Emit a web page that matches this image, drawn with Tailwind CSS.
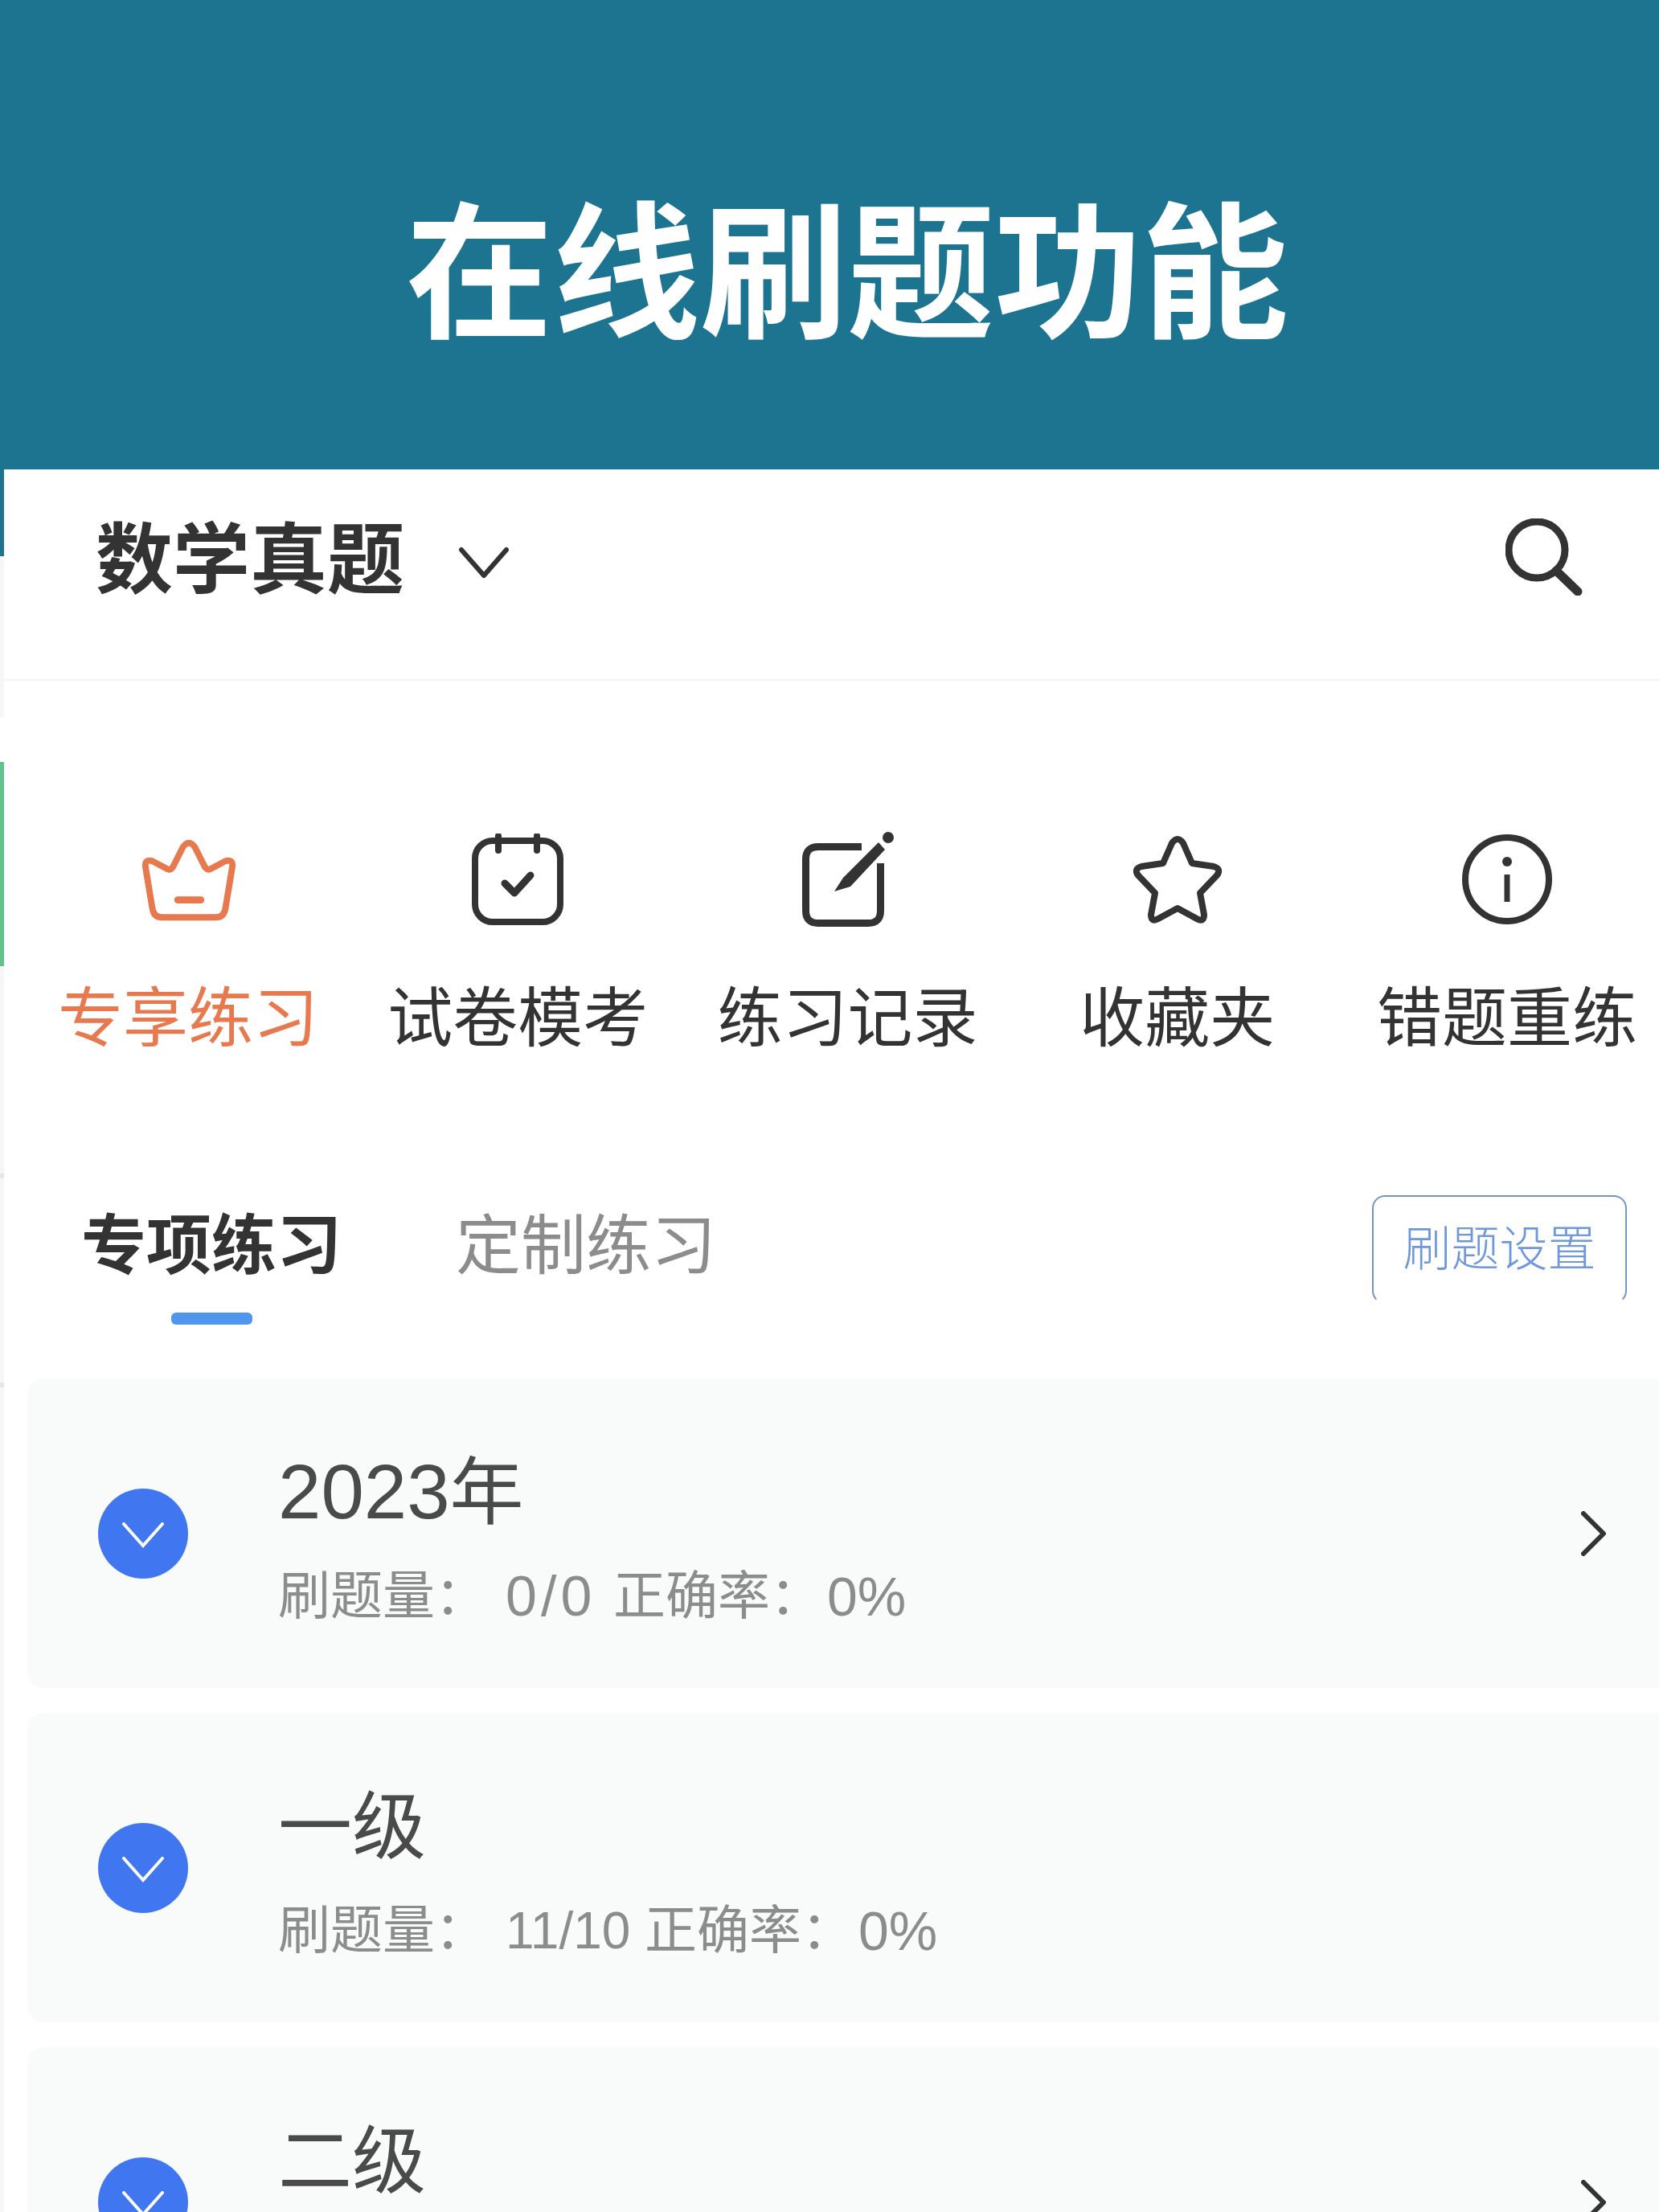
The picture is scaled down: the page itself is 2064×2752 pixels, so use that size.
<!DOCTYPE html>
<html lang="zh-CN">
  <head>
    <meta charset="UTF-8" />
    <title>在线刷题功能</title>
    <script src="https://cdn.jsdelivr.net/npm/@tailwindcss/browser@4"></script>
  </head>
  <body class="bg-white font-['Liberation_Sans','Noto_Sans_CJK_SC',sans-serif] text-[#333333]">
    <div class="relative h-[2752px] w-[2064px] overflow-hidden">
      <!-- left edge leftovers of the stitched screenshot -->
      <div class="absolute left-0 top-[584px] h-[108px] w-[5px] bg-[#1d7491]"></div>
      <div class="absolute left-0 top-[692px] h-[200px] w-[5px] bg-[#f6f6f6]"></div>
      <div class="absolute left-0 top-[948px] h-[254px] w-[5px] bg-[#63c08f]"></div>
      <div class="absolute left-0 top-[1202px] h-[1550px] w-[5px] bg-[#f6f6f6]"></div>
      <div class="absolute left-0 top-[1460px] h-[6px] w-[5px] bg-[#e6e6e6]"></div>
      <div class="absolute left-0 top-[1720px] h-[6px] w-[5px] bg-[#e6e6e6]"></div>

      <header class="flex h-[584px] items-center justify-center bg-[#1d7491] pt-[100px] pl-[44px]">
        <h1 class="text-[183px] leading-none font-bold text-white">在线刷题功能</h1>
      </header>

      <div class="flex h-[263px] items-center justify-between border-b-2 border-[#f3f3f3] pr-[95px] pb-[36px] pl-[119px]">
        <div class="flex items-center gap-[68px]">
          <span class="text-[96px] leading-none font-bold">数学真题</span>
          <svg class="mt-[6px] h-[40px] w-[62px]" viewBox="0 0 62 40" fill="none" stroke="#333333" stroke-width="6" stroke-linecap="round" stroke-linejoin="round"><path d="M3 4 L31 36 L59 4" /></svg>
        </div>
        <svg class="-mt-[8px] h-[96px] w-[96px]" viewBox="0 0 96 96" fill="none" stroke="#333333" stroke-linecap="round"><circle cx="39" cy="39" r="35" stroke-width="9" /><path d="M63 65 L90 91" stroke-width="11" /></svg>
      </div>

      <nav class="mt-[190px] flex justify-between pr-[19px] pl-[64px]">
        <div class="flex w-[340px] flex-col items-center text-[#e8794f]">
          <svg class="ml-[2px] h-[114px] w-[118px]" viewBox="0 0 120 114" fill="none" stroke="currentColor" stroke-width="8" stroke-linecap="round" stroke-linejoin="round">
            <path d="M52 17 Q60 5 68 17 L80 41 Q84 47 89 43 L106 34 Q116 31 115 41 L106 95 Q104 105 94 105 L26 105 Q16 105 14 95 L5 41 Q4 31 14 34 L31 43 Q36 47 40 41 Z" />
            <path d="M46 83 L75 83" stroke-width="9" />
          </svg>
          <span class="mt-[66px] text-[81px] leading-[100px]">专享练习</span>
        </div>
        <div class="flex w-[340px] flex-col items-center">
          <svg class="h-[114px] w-[114px]" viewBox="0 0 114 114" fill="none" stroke="currentColor" stroke-width="8" stroke-linecap="round" stroke-linejoin="round">
            <rect x="4" y="9" width="106" height="101" rx="22" />
            <path d="M33 3 L33 21 M81 3 L81 21" />
            <path d="M41 62 L53 74 L73 52" stroke-width="9" />
          </svg>
          <span class="mt-[66px] text-[81px] leading-[100px]">试卷模考</span>
        </div>
        <div class="flex w-[340px] flex-col items-center">
          <svg class="h-[114px] w-[120px] overflow-visible" viewBox="0 0 120 114" fill="none" stroke="currentColor" stroke-width="9" stroke-linejoin="round">
            <path d="M77 16.5 L23 16.5 Q7.500 16.500 7.500 32 L7.500 96 Q7.500 111.500 23 111.500 L85 111.500 Q100.500 111.500 100.500 96 L100.500 37" />
            <path d="M43 72 L54 55 L98 11 L106 20 L63 66 Z" fill="currentColor" stroke="none" />
            <circle cx="110" cy="5" r="7" fill="currentColor" stroke="none" />
          </svg>
          <span class="mt-[66px] text-[81px] leading-[100px]">练习记录</span>
        </div>
        <div class="flex w-[340px] flex-col items-center">
          <svg class="h-[114px] w-[114px]" viewBox="0 0 114 114" fill="none" stroke="currentColor" stroke-width="8" stroke-linejoin="round">
            <path d="M50 12 Q57 2 64 12 L75 37 L102 41 Q112 44 106 52 L85 74 L90 101 Q90 111 81 106 L57 93 L33 106 Q24 111 24 101 L29 74 L8 52 Q2 44 12 41 L39 37 Z" />
          </svg>
          <span class="mt-[66px] text-[81px] leading-[100px]">收藏夹</span>
        </div>
        <div class="flex w-[340px] flex-col items-center">
          <svg class="h-[114px] w-[114px]" viewBox="0 0 114 114" fill="none" stroke="currentColor" stroke-width="8">
            <circle cx="57" cy="57" r="52" />
            <circle cx="57" cy="35" r="6" fill="currentColor" stroke="none" />
            <path d="M57 51 L57 85" stroke-width="7" />
          </svg>
          <span class="mt-[66px] text-[81px] leading-[100px]">错题重练</span>
        </div>
      </nav>

      <section class="mt-[170px] flex items-start justify-between pr-[40px] pl-[101px]">
        <div class="flex gap-[142px] pt-[13px]">
          <div class="flex flex-col items-center">
            <span class="text-[81px] leading-[100px] font-bold">专项练习</span>
            <span class="mt-[33px] h-[15px] w-[101px] rounded-md bg-[#5096ee]"></span>
          </div>
          <span class="text-[81px] leading-[100px] text-[#8c8c8c]">定制练习</span>
        </div>
        <div class="flex h-[135px] w-[317px] items-start justify-center rounded-[16px] border-2 border-[#7594c4] border-b-transparent pt-[31px] text-[60px] leading-[70px] font-light text-[#6f97dc]">刷题设置</div>
      </section>

      <main class="mt-[67px] flex flex-col gap-[31px] pl-[34px]">
        <div class="flex h-[385px] items-center rounded-l-[20px] bg-[#f9fbfb] pr-[65px] pl-[88px]">
          <span class="flex h-[112px] w-[112px] shrink-0 items-center justify-center rounded-full bg-[#4076f0]">
            <svg class="mt-[4px] h-[32px] w-[52px]" viewBox="0 0 52 32" fill="none" stroke="white" stroke-width="4" stroke-linecap="round"><path d="M2 2 L26 29 L50 2" /></svg>
          </span>
          <div class="ml-[112px] flex-1 pt-[12px]">
            <div class="text-[92px] leading-[110px] text-[#4a4a4a]"><span class="text-[96px]">2023</span>年</div>
            <div class="mt-[34px] flex text-[65px] leading-[80px] text-[#8c8c8c]"><span class="w-[283px]">刷题量：</span><span class="w-[134px] text-[70px] tracking-[5px]">0/0</span><span class="w-[266px]">正确率：</span><span class="text-[68px]">0%</span></div>
          </div>
          <svg class="h-[56px] w-[32px]" viewBox="0 0 32 56" fill="none" stroke="#333333" stroke-width="6" stroke-linecap="round" stroke-linejoin="round"><path d="M3 3 L28 28 L3 53" /></svg>
        </div>
        <div class="flex h-[385px] items-center rounded-l-[20px] bg-[#f9fbfb] pr-[65px] pl-[88px]">
          <span class="flex h-[112px] w-[112px] shrink-0 items-center justify-center rounded-full bg-[#4076f0]">
            <svg class="mt-[4px] h-[32px] w-[52px]" viewBox="0 0 52 32" fill="none" stroke="white" stroke-width="4" stroke-linecap="round"><path d="M2 2 L26 29 L50 2" /></svg>
          </span>
          <div class="ml-[112px] flex-1 pt-[12px]">
            <div class="text-[92px] leading-[110px] text-[#4a4a4a]">一级</div>
            <div class="mt-[34px] flex text-[65px] leading-[80px] text-[#8c8c8c]"><span class="w-[283px]">刷题量：</span><span class="w-[173px] text-[64px]">11/10</span><span class="w-[266px]">正确率：</span><span class="text-[68px]">0%</span></div>
          </div>
        </div>
        <div class="flex h-[385px] items-center rounded-l-[20px] bg-[#f9fbfb] pr-[65px] pl-[88px]">
          <span class="flex h-[112px] w-[112px] shrink-0 items-center justify-center rounded-full bg-[#4076f0]">
            <svg class="mt-[4px] h-[32px] w-[52px]" viewBox="0 0 52 32" fill="none" stroke="white" stroke-width="4" stroke-linecap="round"><path d="M2 2 L26 29 L50 2" /></svg>
          </span>
          <div class="ml-[112px] flex-1 pt-[12px]">
            <div class="text-[92px] leading-[110px] text-[#4a4a4a]">二级</div>
            <div class="mt-[34px] h-[80px]"></div>
          </div>
          <svg class="h-[56px] w-[32px]" viewBox="0 0 32 56" fill="none" stroke="#333333" stroke-width="6" stroke-linecap="round" stroke-linejoin="round"><path d="M3 3 L28 28 L3 53" /></svg>
        </div>
      </main>
    </div>
  </body>
</html>
